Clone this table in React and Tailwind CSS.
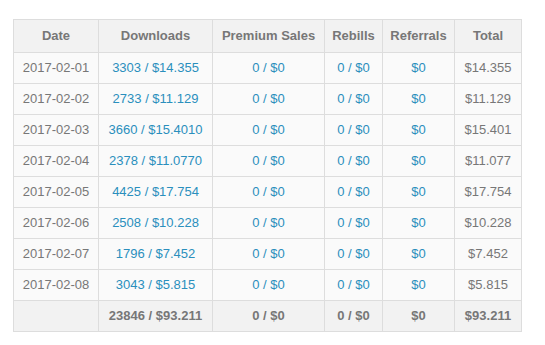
import React from 'react';

const rows = [
  ['2017-02-01', '3303 / $14.355', '$14.355'],
  ['2017-02-02', '2733 / $11.129', '$11.129'],
  ['2017-02-03', '3660 / $15.4010', '$15.401'],
  ['2017-02-04', '2378 / $11.0770', '$11.077'],
  ['2017-02-05', '4425 / $17.754', '$17.754'],
  ['2017-02-06', '2508 / $10.228', '$10.228'],
  ['2017-02-07', '1796 / $7.452', '$7.452'],
  ['2017-02-08', '3043 / $5.815', '$5.815'],
];

const headers = ['Date', 'Downloads', 'Premium Sales', 'Rebills', 'Referrals', 'Total'];
const widths = ['w-[85px]', 'w-[114px]', 'w-[112px]', 'w-[58px]', 'w-[72px]', 'w-[67px]'];

const cell = 'border border-[#dddddd] text-center px-1';

export default function App() {
  return (
    <div className="w-[545px] h-[345px] bg-white pt-[19px] pl-[13px] font-['Liberation_Sans',Arial,sans-serif] text-[13px]">
      <table className="table-fixed border-collapse w-[508px]">
        <thead>
          <tr className="bg-[#f2f2f2] h-[33px]">
            {headers.map((h, i) => (
              <th key={h} className={`${cell} ${widths[i]} font-bold text-[#777777]`}>
                {h}
              </th>
            ))}
          </tr>
        </thead>
        <tbody>
          {rows.map(([date, dl, total]) => (
            <tr key={date} className="bg-[#fafafa] h-[31px]">
              <td className={`${cell} text-[#777777]`}>{date}</td>
              <td className={`${cell} text-[#2a8fbd]`}>{dl}</td>
              <td className={`${cell} text-[#2a8fbd]`}>0 / $0</td>
              <td className={`${cell} text-[#2a8fbd]`}>0 / $0</td>
              <td className={`${cell} text-[#2a8fbd]`}>$0</td>
              <td className={`${cell} text-[#777777]`}>{total}</td>
            </tr>
          ))}
          <tr className="bg-[#f2f2f2] h-[31px] font-bold text-[#777777]">
            <td className={cell}></td>
            <td className={cell}>23846 / $93.211</td>
            <td className={cell}>0 / $0</td>
            <td className={cell}>0 / $0</td>
            <td className={cell}>$0</td>
            <td className={cell}>$93.211</td>
          </tr>
        </tbody>
      </table>
    </div>
  );
}
